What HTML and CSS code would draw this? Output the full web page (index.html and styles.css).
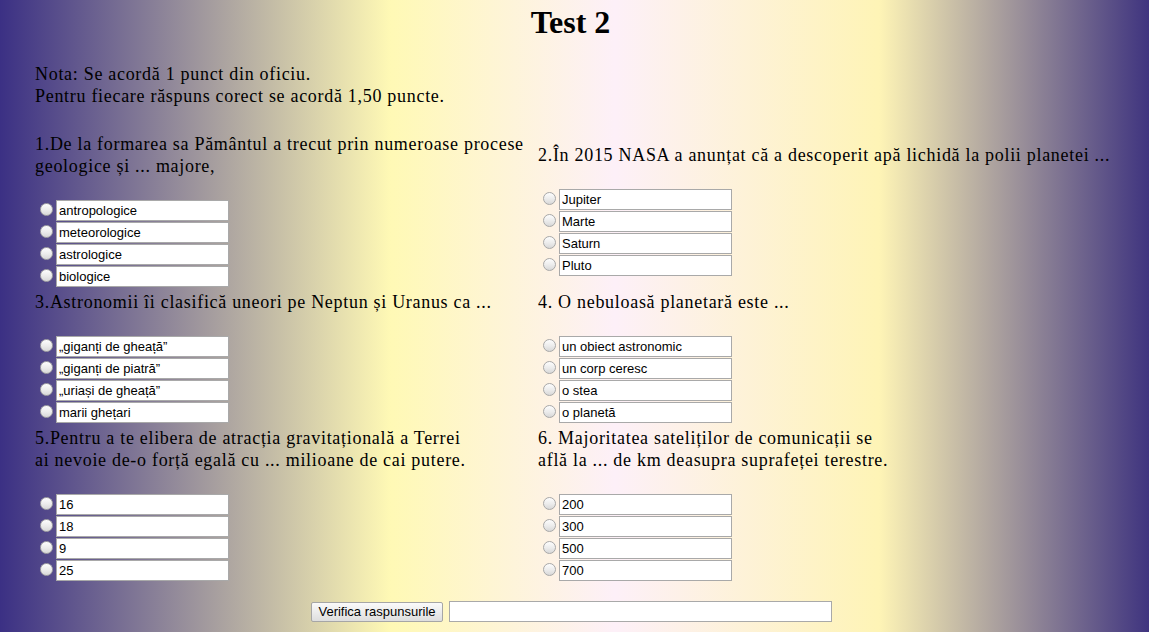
FILE: index.html
```html
<!DOCTYPE html>
<html lang="ro">
<head>
<meta charset="utf-8">
<title>Test 2</title>
<link rel="stylesheet" href="styles.css">
</head>
<body>
<h1 class="title">Test 2</h1>
<main class="quiz">
  <p class="note">Nota: Se acordă 1 punct din oficiu.<br>Pentru fiecare răspuns corect se acordă 1,50 puncte.</p>
  <div class="grid">
    <section class="cell">
      <p class="question">1.De la formarea sa Pământul a trecut prin numeroase procese geologice și ... majore,</p>
      <div class="options">
        <label class="opt"><input type="radio" name="q1" class="radio"><input type="text" class="answer" value="antropologice"></label>
        <label class="opt"><input type="radio" name="q1" class="radio"><input type="text" class="answer" value="meteorologice"></label>
        <label class="opt"><input type="radio" name="q1" class="radio"><input type="text" class="answer" value="astrologice"></label>
        <label class="opt"><input type="radio" name="q1" class="radio"><input type="text" class="answer" value="biologice"></label>
      </div>
    </section>
    <section class="cell">
      <p class="question">2.În 2015 NASA a anunțat că a descoperit apă lichidă la polii planetei ...</p>
      <div class="options">
        <label class="opt"><input type="radio" name="q2" class="radio"><input type="text" class="answer" value="Jupiter"></label>
        <label class="opt"><input type="radio" name="q2" class="radio"><input type="text" class="answer" value="Marte"></label>
        <label class="opt"><input type="radio" name="q2" class="radio"><input type="text" class="answer" value="Saturn"></label>
        <label class="opt"><input type="radio" name="q2" class="radio"><input type="text" class="answer" value="Pluto"></label>
      </div>
    </section>
    <section class="cell">
      <p class="question">3.Astronomii îi clasifică uneori pe Neptun și Uranus ca ...</p>
      <div class="options">
        <label class="opt"><input type="radio" name="q3" class="radio"><input type="text" class="answer" value="„giganți de gheață”"></label>
        <label class="opt"><input type="radio" name="q3" class="radio"><input type="text" class="answer" value="„giganți de piatră”"></label>
        <label class="opt"><input type="radio" name="q3" class="radio"><input type="text" class="answer" value="„uriași de gheață”"></label>
        <label class="opt"><input type="radio" name="q3" class="radio"><input type="text" class="answer" value="marii ghețari"></label>
      </div>
    </section>
    <section class="cell">
      <p class="question">4. O nebuloasă planetară este ...</p>
      <div class="options">
        <label class="opt"><input type="radio" name="q4" class="radio"><input type="text" class="answer" value="un obiect astronomic"></label>
        <label class="opt"><input type="radio" name="q4" class="radio"><input type="text" class="answer" value="un corp ceresc"></label>
        <label class="opt"><input type="radio" name="q4" class="radio"><input type="text" class="answer" value="o stea"></label>
        <label class="opt"><input type="radio" name="q4" class="radio"><input type="text" class="answer" value="o planetă"></label>
      </div>
    </section>
    <section class="cell">
      <p class="question">5.Pentru a te elibera de atracția gravitațională a Terrei<br>ai nevoie de-o forță egală cu ... milioane de cai putere.</p>
      <div class="options">
        <label class="opt"><input type="radio" name="q5" class="radio"><input type="text" class="answer" value="16"></label>
        <label class="opt"><input type="radio" name="q5" class="radio"><input type="text" class="answer" value="18"></label>
        <label class="opt"><input type="radio" name="q5" class="radio"><input type="text" class="answer" value="9"></label>
        <label class="opt"><input type="radio" name="q5" class="radio"><input type="text" class="answer" value="25"></label>
      </div>
    </section>
    <section class="cell">
      <p class="question">6. Majoritatea sateliților de comunicații se<br>află la ... de km deasupra suprafeței terestre.</p>
      <div class="options">
        <label class="opt"><input type="radio" name="q6" class="radio"><input type="text" class="answer" value="200"></label>
        <label class="opt"><input type="radio" name="q6" class="radio"><input type="text" class="answer" value="300"></label>
        <label class="opt"><input type="radio" name="q6" class="radio"><input type="text" class="answer" value="500"></label>
        <label class="opt"><input type="radio" name="q6" class="radio"><input type="text" class="answer" value="700"></label>
      </div>
    </section>
  </div>
  <div class="actions">
    <button type="button" class="check">Verifica raspunsurile</button><input type="text" class="result" value="">
  </div>
</main>
</body>
</html>
```

FILE: styles.css
```css
html, body {
  margin: 0;
  padding: 0;
  height: 100%;
}

body {
  background: linear-gradient(to right,
    #3b3084 0%,
    #fff9b5 34%,
    #fdf0f8 53.5%,
    #fef4b6 76.5%,
    #3f347f 100%);
  color: #000;
  font-family: "Liberation Serif", "Times New Roman", serif;
  overflow: hidden;
}

.title {
  margin: 4px 0 0;
  text-align: center;
  font-size: 32px;
  font-weight: bold;
  line-height: 37px;
  padding-right: 8px;
}

.quiz {
  padding: 0 30px 0 35px;
  font-size: 18px;
  letter-spacing: 0.7px;
  line-height: 22px;
}

.note {
  margin: 22px 0 26px;
}

.grid {
  display: grid;
  grid-template-columns: 499px 1fr;
  column-gap: 4px;
  row-gap: 3px;
  align-items: center;
}

.cell {
  display: flex;
  flex-direction: column;
}

.question {
  margin: 0 0 23px;
}

.options {
  display: flex;
  flex-direction: column;
  letter-spacing: 0;
}

.opt {
  display: flex;
  align-items: flex-start;
  height: 22px;
}

.radio {
  appearance: none;
  -webkit-appearance: none;
  box-sizing: border-box;
  width: 13px;
  height: 13px;
  margin: 3px 3px 0 5px;
  border-radius: 50%;
  border: 1px solid #a8a8a8;
  background: linear-gradient(to bottom, #fdfdfd 0%, #ebebeb 55%, #d8d8d8 100%);
  flex: none;
}

.answer {
  box-sizing: border-box;
  width: 173px;
  height: 21px;
  margin: 0;
  padding: 1px 2px;
  border: 1px solid #a9a9a9;
  background: #fff;
  font-family: "Liberation Sans", Arial, sans-serif;
  font-size: 13px;
  color: #000;
  outline: none;
}

.actions {
  display: flex;
  justify-content: center;
  align-items: center;
  margin: 19px -30px 0 -35px;
  padding-right: 6px;
  letter-spacing: 0;
}

.check {
  box-sizing: border-box;
  height: 20px;
  padding: 0 6px;
  border: 1px solid #a6a6a6;
  border-radius: 2px;
  background: linear-gradient(to bottom, #fafafa 0%, #ececec 50%, #dedede 100%);
  font-family: "Liberation Sans", Arial, sans-serif;
  font-size: 13px;
  color: #000;
}

.result {
  box-sizing: border-box;
  width: 383px;
  height: 21px;
  margin-left: 6px;
  border: 1px solid #a9a9a9;
  background: #fff;
  font-family: "Liberation Sans", Arial, sans-serif;
  font-size: 13px;
}
```
